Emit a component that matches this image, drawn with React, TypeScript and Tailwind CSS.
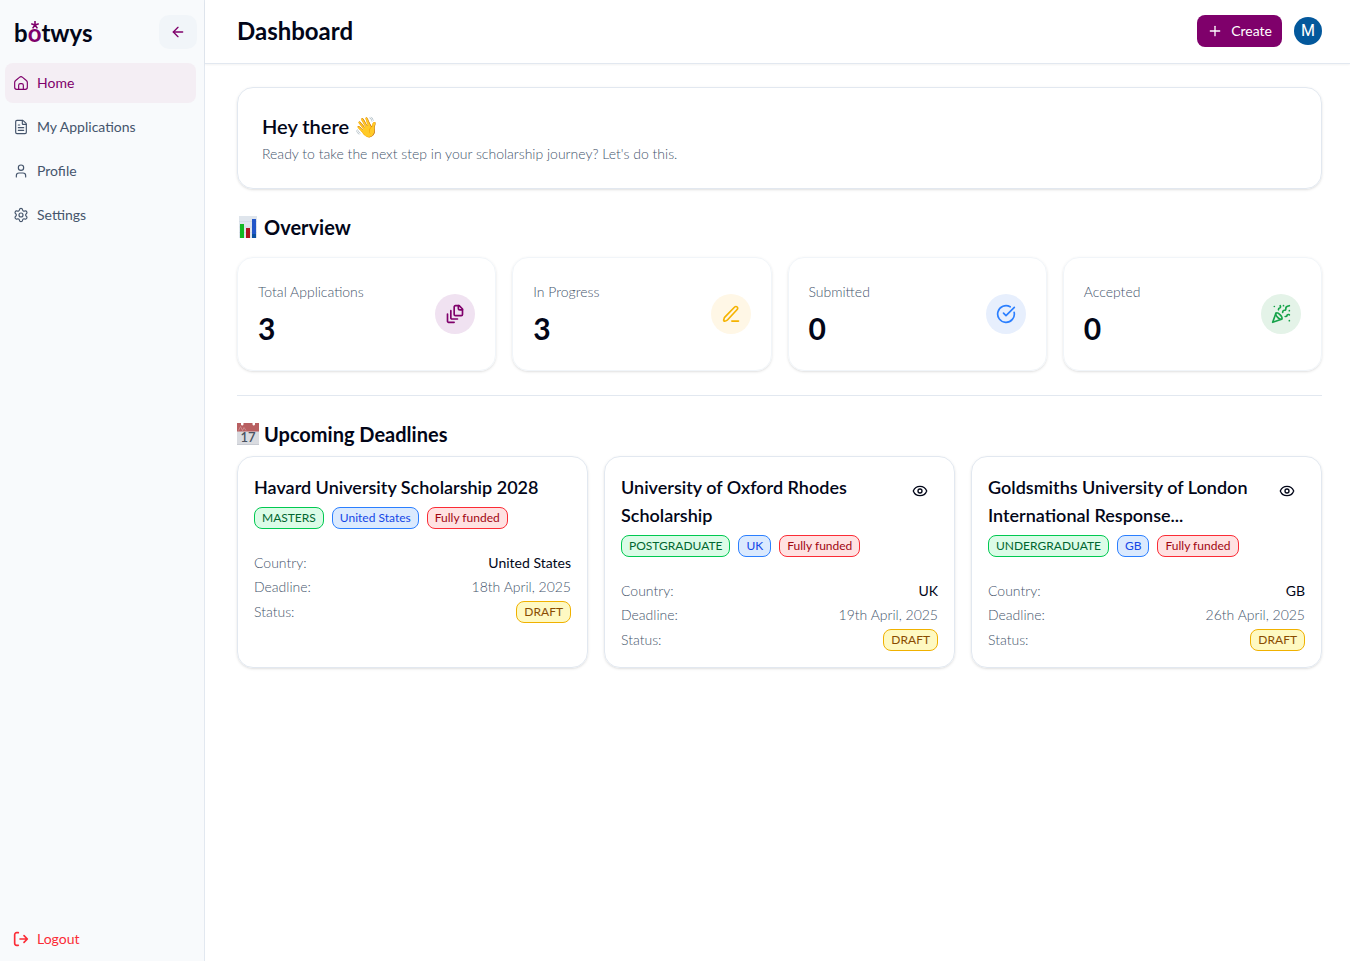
import React from "react";
import {
  ArrowLeft,
  CircleCheckBig,
  Eye,
  FileText,
  PartyPopper,
  Plus,
  Settings,
  User,
} from "lucide-react";

type IconProps = { className?: string; strokeWidth?: number };

function Stroked({ className, strokeWidth = 2, children }: IconProps & { children: React.ReactNode }) {
  return (
    <svg
      viewBox="0 0 24 24"
      className={className}
      fill="none"
      stroke="currentColor"
      strokeWidth={strokeWidth}
      strokeLinecap="round"
      strokeLinejoin="round"
      aria-hidden="true"
    >
      {children}
    </svg>
  );
}

function HomeIcon(props: IconProps) {
  return (
    <Stroked {...props}>
      <path d="M2.500 11.300c0-1.300.5-2.200 1.500-3l5.600-4.800c1.500-1.200 3.300-1.200 4.800 0L20 8.300c1 .8 1.500 1.700 1.500 3V18.500c0 2-1 3-3 3h-13c-2 0-3-1-3-3z" />
      <path d="M8.500 21.500V15.500c0-1.700.8-2.500 2.500-2.500h2c1.700 0 2.500.8 2.500 2.500v6" />
    </Stroked>
  );
}

function StackIcon(props: IconProps) {
  return (
    <Stroked {...props}>
      <path d="M21 7h-3a2 2 0 0 1-2-2V2" />
      <path d="M21 6v6.500c0 .8-.7 1.500-1.500 1.500h-7c-.8 0-1.500-.7-1.500-1.500v-9c0-.8.7-1.500 1.500-1.500H17Z" />
      <path d="M7 8v8.800c0 .3.2.6.4.8.2.2.5.4.8.4H15" />
      <path d="M3 12v8.800c0 .3.2.6.4.8.2.2.5.4.8.4H11" />
    </Stroked>
  );
}

function PenIcon(props: IconProps) {
  return (
    <Stroked {...props}>
      <path d="M13 20.500h8" />
      <path d="M16.400 3.600a2.100 2.100 0 0 1 3 3L8 18.900a4 4 0 0 1-2 1.200l-1.800.4a.8.8 0 0 1-1-1l.4-1.800a4 4 0 0 1 1-2z" />
    </Stroked>
  );
}

function LogoutIcon(props: IconProps) {
  return (
    <Stroked {...props}>
      <path d="M8 21.500H5.500a3 3 0 0 1-3-3v-13a3 3 0 0 1 3-3H8" />
      <path d="M10.500 12H21M16.500 7l5 5-5 5" />
    </Stroked>
  );
}

function StarMark() {
  return (
    <svg
      viewBox="0 0 10 10"
      className="absolute top-1.5 left-1/2 size-2 -translate-x-1/2"
      stroke="currentColor"
      strokeWidth="2"
      aria-hidden="true"
    >
      <path d="M5 5V0M5 5L.3 3.500M5 5l4.700-1.500M5 5L2 9.200M5 5l3 4.200" />
    </svg>
  );
}

function ChartPicture() {
  return (
    <svg viewBox="0 0 22 22" className="size-[22px]" aria-hidden="true">
      <path d="M2 0h18v22H2z" fill="#dfe5ec" />
      <path d="M2 5.500h18M2 11h18M2 16.500h18" stroke="#cdd6e0" strokeWidth=".6" />
      <path d="M3 8h4v14H3z" fill="#12b822" />
      <path d="M9 12h4v10H9z" fill="#b0151f" />
      <path d="M15 3h4v19h-4z" fill="#2256c8" />
      <path d="M15 18h4v4h-4z" fill="#0b4fa0" />
    </svg>
  );
}

function CalendarPicture() {
  return (
    <svg viewBox="0 0 22 22" className="size-[22px]" aria-hidden="true">
      <path d="M0 0h22v22H0z" fill="#d9dbe0" />
      <path d="M0 0h22v8.500H0z" fill="#b85f61" />
      <path d="M1.500 7.500l2-4 2 4 1.500-3 2 3" fill="none" stroke="#d19496" strokeWidth=".8" />
      <path d="M4 0h2.500v1.500a1.300 1.300 0 0 1-2.500 0zM15.500 0H18v1.500a1.300 1.300 0 0 1-2.500 0z" fill="#fff" />
      <path d="M0 21h22v1H0z" fill="#c7cad1" />
      <text
        x="11"
        y="19"
        textAnchor="middle"
        className="font-[Lato,sans-serif] text-[13px] font-semibold"
        fill="#4a5260"
      >
        17
      </text>
    </svg>
  );
}

const navItems = [
  { label: "Home", icon: HomeIcon, active: true },
  { label: "My Applications", icon: FileText, active: false },
  { label: "Profile", icon: User, active: false },
  { label: "Settings", icon: Settings, active: false },
];

const stats = [
  { label: "Total Applications", value: 3, icon: StackIcon, tone: "bg-[#f0e2f1] text-[#7f006b]" },
  { label: "In Progress", value: 3, icon: PenIcon, tone: "bg-[#fff7e6] text-[#f5b301]" },
  { label: "Submitted", value: 0, icon: CircleCheckBig, tone: "bg-[#e7effd] text-[#2b7fff]" },
  { label: "Accepted", value: 0, icon: PartyPopper, tone: "bg-[#e4f3e8] text-[#16a34a]" },
];

const deadlines = [
  {
    title: "Havard University Scholarship 2028",
    level: "MASTERS",
    country: "United States",
    date: "18th April, 2025",
    viewable: false,
  },
  {
    title: "University of Oxford Rhodes Scholarship",
    level: "POSTGRADUATE",
    country: "UK",
    date: "19th April, 2025",
    viewable: true,
  },
  {
    title: "Goldsmiths University of London International Response...",
    level: "UNDERGRADUATE",
    country: "GB",
    date: "26th April, 2025",
    viewable: true,
  },
];

const badgeTones = {
  green: "border-green-500 bg-green-100 text-green-800",
  blue: "border-blue-500 bg-blue-100 text-blue-700",
  red: "border-red-500 bg-red-100 text-red-800",
  yellow: "border-yellow-500 bg-yellow-100 text-yellow-800",
};

function Badge({ tone, children }: { tone: keyof typeof badgeTones; children: React.ReactNode }) {
  return (
    <span className={`rounded-lg border px-[7px] text-xs leading-5 whitespace-nowrap ${badgeTones[tone]}`}>
      {children}
    </span>
  );
}

function Sidebar() {
  return (
    <aside className="flex w-[205px] shrink-0 flex-col border-r border-slate-200 bg-slate-50 pb-0.5">
      <div className="flex items-start justify-between pt-[15px] pr-[7px] pl-3.5">
        <a href="#" aria-label="botwys" className="text-2xl leading-9 font-bold">
          b
          <span className="relative inline-block text-[#7f006b]">
            o
            <StarMark />
          </span>
          twys
        </a>
        <button
          type="button"
          aria-label="Collapse sidebar"
          className="flex h-[34px] w-[38px] items-center justify-center rounded-[10px] bg-slate-100 text-[#7f006b]"
        >
          <ArrowLeft className="size-4" />
        </button>
      </div>
      <nav className="mt-3 flex flex-col gap-1 pr-2 pl-[5px]">
        {navItems.map(({ label, icon: Icon, active }) => (
          <a
            key={label}
            href="#"
            aria-current={active ? "page" : undefined}
            className={`flex h-10 items-center gap-2 rounded-lg px-2 text-sm ${
              active ? "bg-[#f4eef4] text-[#7f006b]" : "text-slate-600"
            }`}
          >
            <Icon className="size-4" strokeWidth={1.75} />
            {label}
          </a>
        ))}
      </nav>
      <button
        type="button"
        className="mt-auto mr-2 ml-[5px] flex h-10 items-center gap-2 px-2 text-sm text-[#fb2c36]"
      >
        <LogoutIcon className="size-4" strokeWidth={2.5} />
        Logout
      </button>
    </aside>
  );
}

function Header() {
  return (
    <header className="flex h-16 items-center justify-between border-b border-slate-200 pr-7 pb-px pl-8 shadow-xs">
      <h1 className="text-2xl font-bold">Dashboard</h1>
      <div className="flex items-center gap-3">
        <button
          type="button"
          className="flex h-8 items-center gap-2 rounded-lg bg-[#7f006b] px-2.5 text-sm text-white"
        >
          <Plus className="size-4" />
          Create
        </button>
        <button
          type="button"
          aria-label="Account"
          className="flex size-7 items-center justify-center rounded-full bg-[#03589c] font-[Roboto,sans-serif] text-base text-white"
        >
          M
        </button>
      </div>
    </header>
  );
}

export default function App() {
  return (
    <div className="flex min-h-screen bg-white font-[Lato,sans-serif] text-slate-950">
      <Sidebar />
      <div className="flex min-w-0 flex-1 flex-col">
        <Header />
        <main className="pt-[23px] pr-7 pb-8 pl-8">
          <section className="rounded-2xl border border-slate-200 p-6 shadow-sm">
            <h2 className="text-xl font-semibold">Hey there 👋</h2>
            <p className="mt-1 text-sm font-light text-slate-600">
              Ready to take the next step in your scholarship journey? Let's do this.
            </p>
          </section>

          <h2 className="mt-6 flex items-center gap-[5px] text-xl font-bold">
            <ChartPicture />
            Overview
          </h2>
          <div className="mt-4 grid grid-cols-4 gap-4">
            {stats.map(({ label, value, icon: Icon, tone }) => (
              <section
                key={label}
                className="flex items-center justify-between rounded-2xl border border-slate-100 px-5 py-6 shadow-sm"
              >
                <div>
                  <h3 className="text-sm font-light text-slate-600">{label}</h3>
                  <p className="mt-2 text-3xl font-bold">{value}</p>
                </div>
                <span className={`flex size-10 items-center justify-center rounded-full ${tone}`}>
                  <Icon className="size-5" />
                </span>
              </section>
            ))}
          </div>

          <hr className="my-6 border-slate-200" />

          <h2 className="flex items-center gap-[5px] text-xl font-bold">
            <CalendarPicture />
            Upcoming Deadlines
          </h2>
          <div className="mt-2 grid grid-cols-3 gap-4">
            {deadlines.map((item) => (
              <article key={item.title} className="rounded-2xl border border-slate-200 p-4 shadow-sm">
                <div className="flex items-start justify-between">
                  <h3 className="text-lg leading-7 font-semibold">{item.title}</h3>
                  {item.viewable && (
                    <button
                      type="button"
                      aria-label={`View ${item.title}`}
                      className="flex h-9 w-9 shrink-0 items-center justify-center"
                    >
                      <Eye className="size-4" />
                    </button>
                  )}
                </div>
                <div className="mt-1.5 flex gap-2">
                  <Badge tone="green">{item.level}</Badge>
                  <Badge tone="blue">{item.country}</Badge>
                  <Badge tone="red">Fully funded</Badge>
                </div>
                <dl className="mt-6 flex flex-col gap-1 text-sm text-slate-600">
                  <div className="flex items-center justify-between">
                    <dt className="font-light">Country:</dt>
                    <dd className="text-slate-950">{item.country}</dd>
                  </div>
                  <div className="flex items-center justify-between">
                    <dt className="font-light">Deadline:</dt>
                    <dd className="font-light">{item.date}</dd>
                  </div>
                  <div className="flex items-center justify-between">
                    <dt className="font-light">Status:</dt>
                    <dd className="flex">
                      <Badge tone="yellow">DRAFT</Badge>
                    </dd>
                  </div>
                </dl>
              </article>
            ))}
          </div>
        </main>
      </div>
    </div>
  );
}
